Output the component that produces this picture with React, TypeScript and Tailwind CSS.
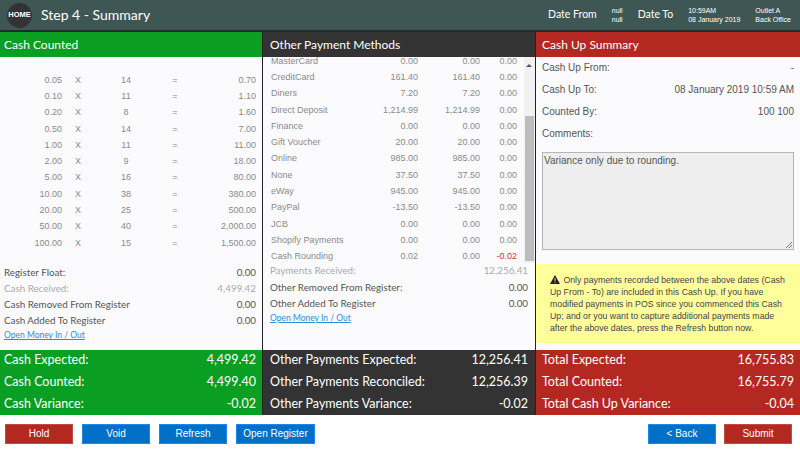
import React from "react";

const seg = "font-['Lato','Open_Sans',sans-serif]";
const ari = "font-['Liberation_Sans',Arial,sans-serif]";

const cash = [
  ["0.05", "14", "0.70"], ["0.10", "11", "1.10"], ["0.20", "8", "1.60"], ["0.50", "14", "7.00"],
  ["1.00", "11", "11.00"], ["2.00", "9", "18.00"], ["5.00", "16", "80.00"], ["10.00", "38", "380.00"],
  ["20.00", "25", "500.00"], ["50.00", "40", "2,000.00"], ["100.00", "15", "1,500.00"],
];
const other = [
  ["MasterCard", "0.00", "0.00", "0.00"], ["CreditCard", "161.40", "161.40", "0.00"], ["Diners", "7.20", "7.20", "0.00"],
  ["Direct Deposit", "1,214.99", "1,214.99", "0.00"], ["Finance", "0.00", "0.00", "0.00"], ["Gift Voucher", "20.00", "20.00", "0.00"],
  ["Online", "985.00", "985.00", "0.00"], ["None", "37.50", "37.50", "0.00"], ["eWay", "945.00", "945.00", "0.00"],
  ["PayPal", "-13.50", "-13.50", "0.00"], ["JCB", "0.00", "0.00", "0.00"], ["Shopify Payments", "0.00", "0.00", "0.00"],
  ["Cash Rounding", "0.02", "0.00", "-0.02"],
];

function Line({ label, value, muted }: { label: string; value: string; muted?: boolean }) {
  return (
    <div className={`flex h-[16.3px] items-center justify-between text-[9.8px] leading-none ${seg} ${muted ? "text-[#aaaaaa]" : "text-[#555555]"}`}>
      <span>{label}</span>
      <span>{value}</span>
    </div>
  );
}

function Total({ label, value }: { label: string; value: string }) {
  return (
    <div className={`flex h-[22px] items-center justify-between pb-[2px] text-[12.5px] leading-none text-white ${seg}`}>
      <span>{label}</span>
      <span>{value}</span>
    </div>
  );
}

function Btn({ children, red, w }: { children: React.ReactNode; red?: boolean; w: string }) {
  return (
    <button className={`h-[20px] ${w} border text-[10px] leading-none text-white ${ari} ${red ? "border-[#c44a42] bg-[#b32821]" : "border-[#1e88e5] bg-[#0270c6]"}`}>
      {children}
    </button>
  );
}

function Info({ label, value }: { label: string; value?: string }) {
  return (
    <div className={`flex h-[22px] items-center justify-between text-[10px] leading-none text-[#555555] ${ari}`}>
      <span>{label}</span>
      <span>{value}</span>
    </div>
  );
}

export default function App() {
  return (
    <div className="flex h-[451px] w-[800px] flex-col overflow-hidden bg-white">
      <header className="flex h-[32px] shrink-0 items-center border-b-2 border-[#222b2a] bg-[#3f5754] text-white">
        <div className={`ml-[7px] flex h-[25px] w-[25px] shrink-0 items-center justify-center rounded-full bg-[#333333] text-[7.5px] font-bold ${ari}`}>HOME</div>
        <div className={`ml-[9px] text-[14px] leading-none ${seg}`}>Step 4 - Summary</div>
        <div className="ml-auto flex items-center">
          <span className={`text-[10.5px] ${seg}`}>Date From</span>
          <div className={`ml-[15px] text-[7px] leading-[9px] ${ari}`}><div>null</div><div>null</div></div>
          <span className={`ml-[15px] text-[10.5px] ${seg}`}>Date To</span>
          <div className={`ml-[15px] whitespace-nowrap text-[7px] leading-[9px] ${ari}`}><div>10:59AM</div><div>08 January 2019</div></div>
          <div className={`ml-[15px] mr-[9px] whitespace-nowrap text-[7px] leading-[9px] ${ari}`}><div>Outlet A</div><div>Back Office</div></div>
        </div>
      </header>

      <div className="flex h-[318px] shrink-0">
        {/* Cash counted */}
        <section className="flex w-[263px] shrink-0 flex-col border-r border-[#222222] bg-[#fbfbfe]">
          <h2 className={`flex h-[25px] shrink-0 items-center bg-[#0a9e22] px-[4px] text-[12px] font-normal text-white ${seg}`}>Cash Counted</h2>
          <div className={`px-[6px] pt-[15px] text-[9px] leading-none text-[#8a8a8a] ${ari}`}>
            {cash.map((r) => (
              <div key={r[0]} className="grid h-[16.3px] grid-cols-[56px_32px_64px_34px_1fr] items-center">
                <span className="text-right">{r[0]}</span>
                <span className="pl-[13px]">X</span>
                <span className="text-center">{r[1]}</span>
                <span className="text-center">=</span>
                <span className="text-right">{r[2]}</span>
              </div>
            ))}
          </div>
          <div className="px-[4px] pr-[6px] pt-[13px]">
            <Line label="Register Float:" value="0.00" />
            <Line label="Cash Received:" value="4,499.42" muted />
            <Line label="Cash Removed From Register" value="0.00" />
            <Line label="Cash Added To Register" value="0.00" />
            <a className={`block text-[8.5px] leading-[12px] text-[#2b8fd8] underline ${seg}`}>Open Money In / Out</a>
          </div>
        </section>

        {/* Other payments */}
        <section className="flex w-[273px] shrink-0 flex-col border-r border-[#222222] bg-[#fbfbfe]">
          <h2 className={`flex h-[25px] shrink-0 items-center bg-[#333333] px-[7px] text-[12px] font-normal text-white ${seg}`}>Other Payment Methods</h2>
          <div className="relative h-[206px] shrink-0 overflow-hidden">
            <div className={`-mt-[4px] pl-[8px] text-[9px] leading-none text-[#8a8a8a] ${ari}`}>
              {other.map((r) => (
                <div key={r[0]} className="grid h-[16.3px] grid-cols-[85px_62px_62px_37px] items-center">
                  <span className="whitespace-nowrap">{r[0]}</span>
                  <span className="text-right">{r[1]}</span>
                  <span className="text-right">{r[2]}</span>
                  <span className={`text-right ${r[3] === "-0.02" ? "text-[#d0342c]" : ""}`}>{r[3]}</span>
                </div>
              ))}
            </div>
            <div className="absolute bottom-0 right-0 top-0 w-[11px] bg-[#f1f1f1]">
              <svg className="absolute left-[1px] top-[6px]" width="8" height="5" viewBox="0 0 8 5"><path d="M4 1 L7 4 H1 Z" fill="#555555" /></svg>
              <div className="absolute left-[1px] top-[59px] h-[145px] w-[9px] bg-[#bdbdbd]" />
            </div>
          </div>
          <div className="px-[7px]">
            <Line label="Payments Received:" value="12,256.41" muted />
            <Line label="Other Removed From Register:" value="0.00" />
            <Line label="Other Added To Register" value="0.00" />
            <a className={`block text-[8.5px] leading-[12px] text-[#2b8fd8] underline ${seg}`}>Open Money In / Out</a>
          </div>
        </section>

        {/* Summary */}
        <section className="flex min-w-0 flex-1 flex-col bg-[#fbfbfe]">
          <h2 className={`flex h-[25px] shrink-0 items-center bg-[#b32821] px-[6px] text-[12px] font-normal text-white ${seg}`}>Cash Up Summary</h2>
          <div className="px-[6px]">
            <Info label="Cash Up From:" value="-" />
            <Info label="Cash Up To:" value="08 January 2019 10:59 AM" />
            <Info label="Counted By:" value="100 100" />
            <Info label="Comments:" />
            <div className={`relative mt-[7px] h-[98px] border border-[#b5b5b5] bg-[#eeeeee] p-[1px] text-[10px] leading-[13px] text-[#555555] ${ari}`}>
              Variance only due to rounding.
              <svg className="absolute bottom-[1px] right-[1px]" width="7" height="7" viewBox="0 0 7 7"><path d="M1 7 L7 1 M4 7 L7 4" stroke="#777777" strokeWidth="1" /></svg>
            </div>
          </div>
          <div className={`mt-[14px] h-[79px] bg-[#ffff99] pl-[14px] pr-[10px] pt-[10px] text-[8.75px] leading-[12px] text-[#444444] ${ari}`}>
            <svg className="mr-[1px] inline-block align-[-1px]" width="10" height="9" viewBox="0 0 10 9"><path d="M5 0 L10 9 H0 Z" fill="#222222" /><path d="M4.6 3 H5.4 V6 H4.6 Z M4.6 6.8 H5.4 V7.8 H4.6 Z" fill="#ffff99" /></svg>
            {" "}Only payments recorded between the above dates (Cash Up From - To) are included in this Cash Up. If you have modified payments in POS since you commenced this Cash Up; and or you want to capture additional payments made after the above dates, press the Refresh button now.
          </div>
        </section>
      </div>

      <div className="flex h-[65px] shrink-0">
        <div className="w-[263px] shrink-0 border-r border-[#222222] bg-[#0a9e22] pl-[4px] pr-[6px]">
          <Total label="Cash Expected:" value="4,499.42" />
          <Total label="Cash Counted:" value="4,499.40" />
          <Total label="Cash Variance:" value="-0.02" />
        </div>
        <div className="w-[273px] shrink-0 border-r border-[#222222] bg-[#333333] px-[7px]">
          <Total label="Other Payments Expected:" value="12,256.41" />
          <Total label="Other Payments Reconciled:" value="12,256.39" />
          <Total label="Other Payments Variance:" value="-0.02" />
        </div>
        <div className="flex-1 bg-[#b32821] px-[6px]">
          <Total label="Total Expected:" value="16,755.83" />
          <Total label="Total Counted:" value="16,755.79" />
          <Total label="Total Cash Up Variance:" value="-0.04" />
        </div>
      </div>

      <footer className="flex items-center gap-[9px] pl-[5px] pr-[8px] pt-[9px]">
        <Btn red w="w-[68px]">Hold</Btn>
        <Btn w="w-[68px]">Void</Btn>
        <Btn w="w-[68px]">Refresh</Btn>
        <Btn w="w-[79px]">Open Register</Btn>
        <div className="ml-auto flex gap-[8px]">
          <Btn w="w-[68px]">&lt; Back</Btn>
          <Btn red w="w-[68px]">Submit</Btn>
        </div>
      </footer>
    </div>
  );
}
